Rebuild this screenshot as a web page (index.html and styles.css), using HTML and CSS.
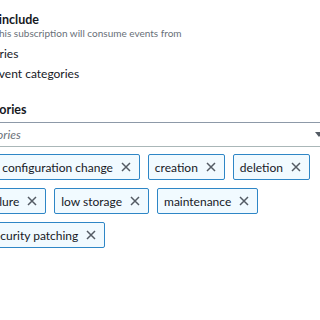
FILE: index.html
```html
<!DOCTYPE html>
<html>
<head>
<meta charset="utf-8">
<link rel="stylesheet" href="styles.css">
</head>
<body>
<div class="page">
  <div class="field field-1">
    <div class="label">Event categories to include</div>
    <div class="desc">Choose event categories this subscription will consume events from</div>
    <div class="radios">
      <label class="radio"><span class="dot"></span><span>All event categories</span></label>
      <label class="radio"><span class="dot dot-on"></span><span>Select specific event categories</span></label>
    </div>
  </div>
  <div class="field field-2">
    <div class="label">Select event categories</div>
    <div class="select">
      <span class="placeholder">Select event categories</span>
      <span class="caret"></span>
    </div>
    <div class="tokens">
      <span class="token">availability<svg class="x" viewBox="0 0 10 10"><path d="M1 1L9 9M9 1L1 9"/></svg></span>
      <span class="token">configuration change<svg class="x" viewBox="0 0 10 10"><path d="M1 1L9 9M9 1L1 9"/></svg></span>
      <span class="token">creation<svg class="x" viewBox="0 0 10 10"><path d="M1 1L9 9M9 1L1 9"/></svg></span>
      <span class="token">deletion<svg class="x" viewBox="0 0 10 10"><path d="M1 1L9 9M9 1L1 9"/></svg></span>
      <span class="token">failover<svg class="x" viewBox="0 0 10 10"><path d="M1 1L9 9M9 1L1 9"/></svg></span>
      <span class="token">failure<svg class="x" viewBox="0 0 10 10"><path d="M1 1L9 9M9 1L1 9"/></svg></span>
      <span class="token">low storage<svg class="x" viewBox="0 0 10 10"><path d="M1 1L9 9M9 1L1 9"/></svg></span>
      <span class="token">maintenance<svg class="x" viewBox="0 0 10 10"><path d="M1 1L9 9M9 1L1 9"/></svg></span>
      <span class="token">security<svg class="x" viewBox="0 0 10 10"><path d="M1 1L9 9M9 1L1 9"/></svg></span>
      <span class="token">security patching<svg class="x" viewBox="0 0 10 10"><path d="M1 1L9 9M9 1L1 9"/></svg></span>
    </div>
  </div>
</div>
</body>
</html>
```

FILE: styles.css
```css
html, body {
  margin: 0;
  padding: 0;
  background: #ffffff;
  overflow: hidden;
}
body {
  font-family: Lato, "Open Sans", sans-serif;
  font-size: 12px;
  color: #16191f;
}
.page {
  margin-left: -102px;
  width: 434px;
  padding-top: 12px;
}
.field-1 {
  margin-left: -9px;
}
.label {
  font-size: 12.5px;
  font-weight: 700;
  line-height: 15px;
}
.desc {
  margin-left: -4px;
  font-size: 10px;
  line-height: 12px;
  color: #687078;
}
.radios {
  display: flex;
  flex-direction: column;
  gap: 4px;
  margin-top: 7px;
}
.radio {
  display: flex;
  align-items: center;
  gap: 10px;
  font-size: 12px;
  line-height: 16px;
}
.dot {
  width: 16px;
  height: 16px;
  border: 1px solid #879596;
  border-radius: 50%;
  box-sizing: border-box;
}
.dot-on {
  border: 5px solid #0073bb;
}
.field-2 {
  margin-top: 20px;
}
.select {
  margin-top: 5px;
  height: 25px;
  box-sizing: border-box;
  border-top: 1px solid #8d99a8;
  border-bottom: 1px solid #aab7b8;
  border-left: 1px solid #aab7b8;
  border-right: 1px solid #aab7b8;
  display: flex;
  align-items: center;
  justify-content: space-between;
  padding: 0 8px 0 8px;
}
.placeholder {
  font-style: italic;
  color: #687078;
}
.caret {
  width: 0;
  height: 0;
  border-left: 4px solid transparent;
  border-right: 4px solid transparent;
  border-top: 5px solid #545b64;
}
.tokens {
  display: flex;
  flex-wrap: wrap;
  gap: 8px;
  margin-top: 7px;
}
.token {
  display: inline-flex;
  align-items: center;
  gap: 8px;
  height: 26px;
  box-sizing: border-box;
  padding: 0 8px 0 6px;
  border: 1px solid #2e86c6;
  background: #f1faff;
  border-radius: 2px;
  color: #16191f;
}
.x {
  width: 10px;
  height: 10px;
  stroke: #545b64;
  stroke-width: 1.5;
  fill: none;
}
```
